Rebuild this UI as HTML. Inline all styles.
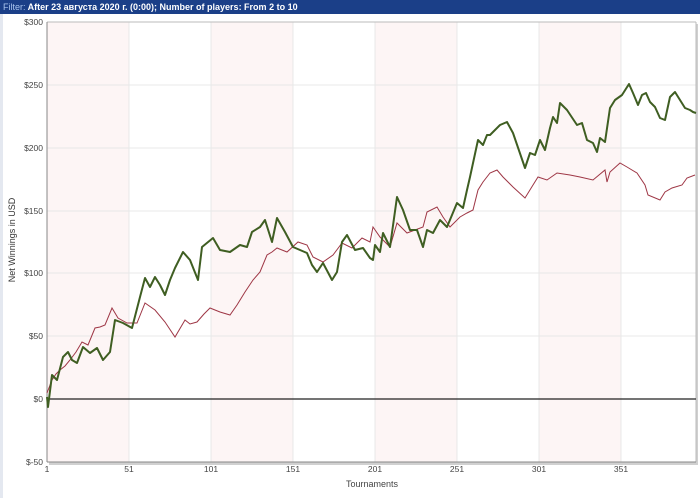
<!DOCTYPE html>
<html><head><meta charset="utf-8"><style>
body{margin:0;width:700px;height:498px;background:#fff;overflow:hidden;font-family:"Liberation Sans",sans-serif}
.bar{position:absolute;left:0;top:0;width:700px;height:14px;background:#1b3f88;color:#fff;font-size:9px;font-weight:bold;line-height:14px;padding-left:3px;box-sizing:border-box}
.bar span{color:#a9c4ee;font-weight:normal}
</style></head><body>
<div class="bar"><span>Filter:</span> After 23 августа 2020 г. (0:00); Number of players: From 2 to 10</div>
<svg width="700" height="498" style="position:absolute;left:0;top:0;z-index:-1" font-family="Liberation Sans, sans-serif">
<rect x="0" y="14" width="3" height="484" fill="#e4e8f0"/>
<rect x="49" y="24" width="649" height="441" fill="#d0d0d0"/>
<rect x="47" y="22" width="649" height="440" fill="#fff"/>
<g fill="#fdf5f5">
<rect x="47" y="22" width="82" height="440"/><rect x="211" y="22" width="82" height="440"/><rect x="375" y="22" width="82" height="440"/><rect x="539" y="22" width="82" height="440"/>
</g>
<g stroke="#e8e8e8" stroke-width="1">
<line x1="47" y1="85" x2="696" y2="85"/><line x1="47" y1="148" x2="696" y2="148"/><line x1="47" y1="211" x2="696" y2="211"/><line x1="47" y1="273" x2="696" y2="273"/><line x1="47" y1="336" x2="696" y2="336"/>
<line x1="129" y1="22" x2="129" y2="462"/><line x1="211" y1="22" x2="211" y2="462"/><line x1="293" y1="22" x2="293" y2="462"/><line x1="375" y1="22" x2="375" y2="462"/><line x1="457" y1="22" x2="457" y2="462"/><line x1="539" y1="22" x2="539" y2="462"/><line x1="621" y1="22" x2="621" y2="462"/>
</g>
<line x1="47" y1="22" x2="696" y2="22" stroke="#bbb"/>
<line x1="696" y1="22" x2="696" y2="462" stroke="#bbb"/>
<line x1="47" y1="22" x2="47" y2="462" stroke="#888"/>
<line x1="47" y1="462" x2="696" y2="462" stroke="#888"/>
<line x1="47" y1="399" x2="696" y2="399" stroke="#222" stroke-width="1.3"/>
<g font-size="8.5" fill="#444" text-anchor="end">
<text x="43" y="25">$300</text><text x="43" y="88">$250</text><text x="43" y="151">$200</text><text x="43" y="214">$150</text><text x="43" y="276">$100</text><text x="43" y="339">$50</text><text x="43" y="402">$0</text><text x="43" y="465">$-50</text>
</g>
<g font-size="8.5" fill="#444" text-anchor="middle">
<text x="47" y="472">1</text><text x="129" y="472">51</text><text x="211" y="472">101</text><text x="293" y="472">151</text><text x="375" y="472">201</text><text x="457" y="472">251</text><text x="539" y="472">301</text><text x="621" y="472">351</text>
<text x="372" y="487" font-size="9">Tournaments</text>
</g>
<text transform="translate(15,240) rotate(-90)" font-size="9" fill="#333" text-anchor="middle">Net Winnings in USD</text>
<polyline fill="none" stroke="#9e3645" stroke-width="1" points="47,393 52,380 56,374 60,370 65,366 70,360 76,352 82,342 88,345 95,328 100,327 105,325 112,308 118,318 127,323 137,323 145,303 155,310 165,322 175,337 185,320 190,324 197,322 204,314 210,308 220,312 230,315 237,305 245,292 253,280 260,272 267,255 272,252 277,248 287,252 298,242 307,245 313,257 323,262 333,255 342,243 352,248 362,238 370,242 373,227 380,237 390,247 397,223 407,233 415,230 423,227 427,212 437,207 443,217 450,227 460,217 467,213 473,210 478,190 483,182 490,173 497,170 503,177 513,187 525,198 533,185 538,177 547,180 557,173 570,175 580,177 593,180 605,170 607,182 610,172 620,163 627,167 637,173 645,185 648,195 660,200 665,192 672,188 682,185 687,178 695,175"/>
<polyline fill="none" stroke="#3f5e22" stroke-width="2" stroke-linejoin="round" points="47,397 48,407 52,375 57,380 63,357 68,352 72,360 77,363 83,347 90,353 97,348 103,360 110,352 115,320 123,323 132,328 140,297 145,278 150,287 155,277 160,285 165,295 170,280 175,268 183,252 190,260 198,280 202,247 213,238 220,250 230,252 240,245 247,247 252,232 260,227 265,220 272,242 277,218 285,232 293,247 300,250 307,253 312,265 317,272 323,263 332,280 337,272 342,242 347,235 355,250 363,248 370,258 373,260 375,245 380,252 383,233 390,247 397,197 403,210 410,230 417,230 423,247 427,230 433,233 440,220 447,227 457,203 463,208 467,190 470,177 478,140 483,145 487,135 490,135 495,130 500,125 507,122 513,133 525,168 530,153 535,155 540,140 545,150 550,128 553,117 557,123 560,103 567,110 577,125 582,123 587,140 593,143 597,152 600,138 605,142 610,108 615,100 622,95 629,84 633,93 638,105 642,95 646,93 650,102 655,107 660,118 665,120 670,97 675,92 680,100 685,108 690,110 693,112 696,113"/>
</svg>
</body></html>
